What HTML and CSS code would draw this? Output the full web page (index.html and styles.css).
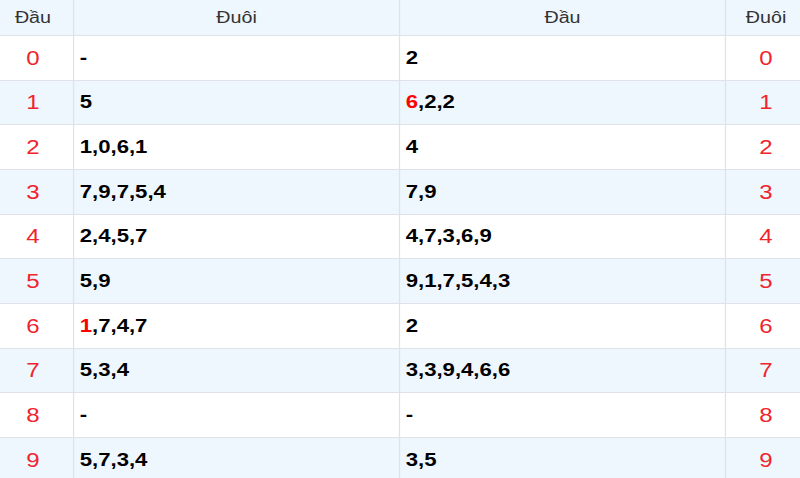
FILE: index.html
```html
<!DOCTYPE html>
<html lang="vi">
<head>
<meta charset="utf-8">
<title>Loto đầu đuôi</title>
<link rel="stylesheet" href="styles.css">
</head>
<body>
<div class="board">
  <div class="row head">
    <div class="cell num">Đầu</div>
    <div class="cell mid">Đuôi</div>
    <div class="cell mid">Đầu</div>
    <div class="cell num last">Đuôi</div>
  </div>
  <div class="row"><div class="cell num">0</div><div class="cell val">-</div><div class="cell val">2</div><div class="cell num last">0</div></div>
  <div class="row alt"><div class="cell num">1</div><div class="cell val">5</div><div class="cell val"><span class="hot">6</span>,2,2</div><div class="cell num last">1</div></div>
  <div class="row"><div class="cell num">2</div><div class="cell val">1,0,6,1</div><div class="cell val">4</div><div class="cell num last">2</div></div>
  <div class="row alt"><div class="cell num">3</div><div class="cell val">7,9,7,5,4</div><div class="cell val">7,9</div><div class="cell num last">3</div></div>
  <div class="row"><div class="cell num">4</div><div class="cell val">2,4,5,7</div><div class="cell val">4,7,3,6,9</div><div class="cell num last">4</div></div>
  <div class="row alt"><div class="cell num">5</div><div class="cell val">5,9</div><div class="cell val">9,1,7,5,4,3</div><div class="cell num last">5</div></div>
  <div class="row"><div class="cell num">6</div><div class="cell val"><span class="hot">1</span>,7,4,7</div><div class="cell val">2</div><div class="cell num last">6</div></div>
  <div class="row alt"><div class="cell num">7</div><div class="cell val">5,3,4</div><div class="cell val">3,3,9,4,6,6</div><div class="cell num last">7</div></div>
  <div class="row"><div class="cell num">8</div><div class="cell val">-</div><div class="cell val">-</div><div class="cell num last">8</div></div>
  <div class="row alt"><div class="cell num">9</div><div class="cell val">5,7,3,4</div><div class="cell val">3,5</div><div class="cell num last">9</div></div>
</div>
</body>
</html>
```
FILE: styles.css
```css
html, body {
  margin: 0;
  padding: 0;
  background: #ffffff;
  overflow: hidden;
}

body {
  font-family: "Liberation Sans", Arial, sans-serif;
}

.board {
  width: 661px;
  margin-left: -7px;
  transform: scaleX(1.23);
  transform-origin: 0 0;
}

.row {
  display: grid;
  grid-template-columns: 66px 265px 265px 65px;
  height: 44.67px;
  box-sizing: border-box;
  border-bottom: 1px solid #dfe3e8;
  background: #ffffff;
}

.row.alt {
  background: #eef6fe;
}

.row.head {
  height: 36px;
  background: #eef6fe;
}

.cell {
  display: flex;
  align-items: center;
  border-right: 1px solid #dfe3e8;
  min-width: 0;
}

.cell.last {
  border-right: none;
}

.num {
  justify-content: center;
  color: #f0242c;
  font-size: 19.5px;
  padding-top: 1px;
}

.val {
  padding-left: 4.5px;
  padding-top: 1px;
  font-size: 18px;
  font-weight: bold;
  color: #000000;
}

.head .cell {
  font-size: 16px;
  color: #333333;
  font-weight: normal;
  padding-top: 0;
}

.head .mid {
  justify-content: center;
}

.hot {
  color: #ff0000;
}
```
